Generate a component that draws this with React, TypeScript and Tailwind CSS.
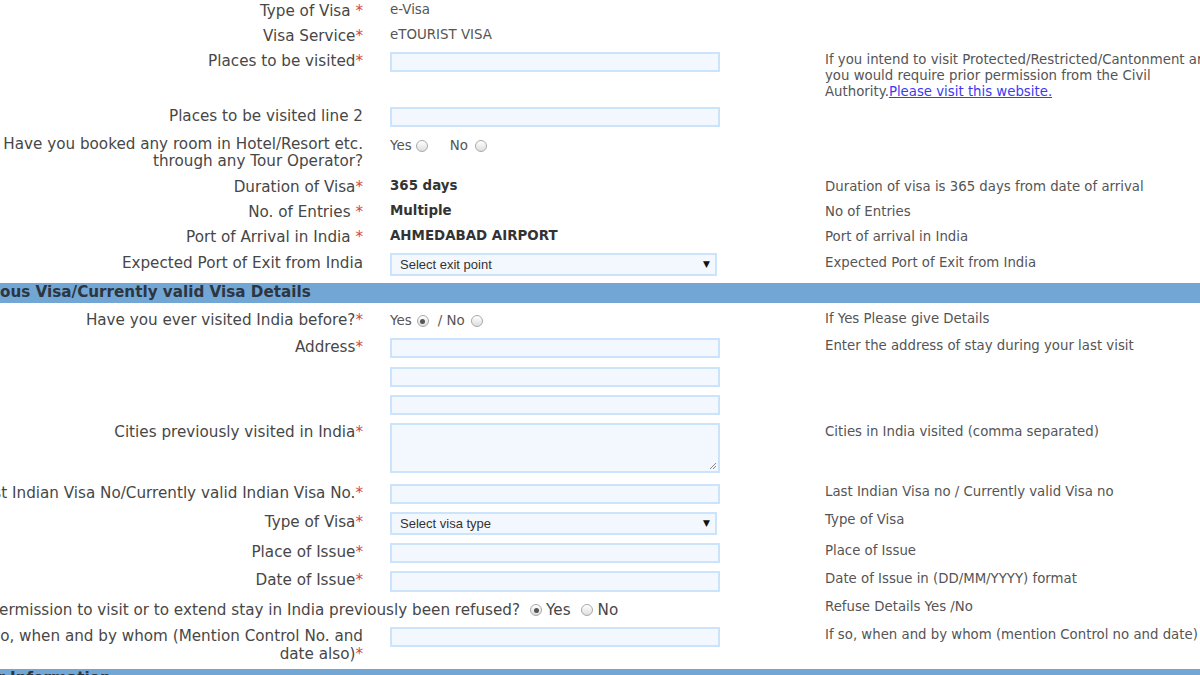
import React from 'react';

const LABEL = "font-['DejaVu_Sans',sans-serif] text-[15.2px] leading-[18px] text-[#474747]";
const VALUE = "font-['DejaVu_Sans',sans-serif] text-[13.4px] leading-[18px] text-[#555]";
const HELP = "font-['DejaVu_Sans',sans-serif] text-[13.3px] leading-[16px] text-[#555]";

function Star({ space }: { space?: boolean }) {
    return <span className="text-[#d0464b]">{space ? ' *' : '*'}</span>;
}

function Radio({ checked }: { checked?: boolean }) {
    return (
        <span className="inline-flex items-center justify-center w-[12px] h-[12px] rounded-full border border-[#a9a9a9] bg-gradient-to-b from-white to-[#dedede]">
            {checked && <span className="w-[5px] h-[5px] rounded-full bg-[#555]" />}
        </span>
    );
}

function TextBox({ h = 'h-[20px]' }: { h?: string }) {
    return <div className={`w-[330px] ${h} border-2 border-[#cbe4fb] bg-[#f3f8fe]`} />;
}

function Select({ text }: { text: string }) {
    return (
        <div className="w-[327px] h-[23px] border-2 border-[#cbe4fb] bg-[#f3f8fe] flex items-center justify-between pl-[8px] pr-[5px]">
            <span className="font-['Liberation_Sans',sans-serif] text-[13px] text-[#333]">{text}</span>
            <span className="text-[9px] text-[#111] leading-none">▼</span>
        </div>
    );
}

type RowProps = {
    h: number;
    label?: React.ReactNode;
    lp?: number;
    control?: React.ReactNode;
    cp?: number;
    help?: React.ReactNode;
    hp?: number;
};

function Row({ h, label, lp = 0, control, cp = 0, help, hp = 0 }: RowProps) {
    return (
        <div className="grid grid-cols-[434px_435px_1fr]" style={{ height: h }}>
            <div className={`${LABEL} text-right pr-[27px]`} style={{ paddingTop: lp }}>{label}</div>
            <div className={VALUE} style={{ paddingTop: cp }}>{control}</div>
            <div className={HELP} style={{ paddingTop: hp }}>{help}</div>
        </div>
    );
}

function SectionBar({ title }: { title: string }) {
    return (
        <div className="h-[20px] bg-[#72a6d4] flex items-center">
            <span className="font-['DejaVu_Sans',sans-serif] font-bold text-[15.2px] text-[#2c3540] leading-none">{title}</span>
        </div>
    );
}

export default function App() {
    return (
        <div className="w-[1200px] h-[675px] overflow-hidden bg-white">
            <div className="ml-[-44px] w-[1320px]">
                <Row h={23} label={<>Type of Visa<Star space /></>} lp={2}
                    control="e-Visa" cp={1} />
                <Row h={26} label={<>Visa Service<Star /></>} lp={4}
                    control="eTOURIST VISA" cp={3} />
                <Row h={55} label={<>Places to be visited<Star /></>} lp={3}
                    control={<TextBox />} cp={3}
                    hp={3}
                    help={
                        <div className="whitespace-nowrap">
                            If you intend to visit Protected/Restricted/Cantonment area<br />
                            you would require prior permission from the Civil<br />
                            Authority.<a className="text-[#3b3bf0] underline">Please visit this website.</a>
                        </div>
                    } />
                <Row h={27} label="Places to be visited line 2" lp={3} control={<TextBox />} cp={3} />
                <Row h={43}
                    label={<div className="leading-[17px]">Have you booked any room in Hotel/Resort etc.<br />through any Tour Operator?</div>} lp={5}
                    control={
                        <div className="flex items-center">
                            <span>Yes</span><span className="ml-[4px] flex"><Radio /></span>
                            <span className="ml-[22px]">No</span><span className="ml-[7px] flex"><Radio /></span>
                        </div>
                    } cp={6} />
                <Row h={26} label={<>Duration of Visa<Star /></>} lp={4}
                    control={<div className="font-bold text-[#333]">365 days</div>} cp={3}
                    help="Duration of visa is 365 days from date of arrival" hp={5} />
                <Row h={25} label={<>No. of Entries<Star space /></>} lp={3}
                    control={<div className="font-bold text-[#333]">Multiple</div>} cp={2}
                    help="No of Entries" hp={4} />
                <Row h={25} label={<>Port of Arrival in India<Star space /></>} lp={3}
                    control={<div className="font-bold text-[#333]">AHMEDABAD AIRPORT</div>} cp={2}
                    help="Port of arrival in India" hp={4} />
                <Row h={33} label="Expected Port of Exit from India" lp={4}
                    control={<Select text="Select exit point" />} cp={3}
                    help="Expected Port of Exit from India" hp={5} />

                <SectionBar title="Previous Visa/Currently valid Visa Details" />

                <Row h={35} label={<>Have you ever visited India before?<Star /></>} lp={8}
                    control={
                        <div className="flex items-center">
                            <span>Yes</span><span className="ml-[5px] flex"><Radio checked /></span>
                            <span className="ml-[9px]">/ No</span><span className="ml-[6px] flex"><Radio /></span>
                        </div>
                    } cp={9}
                    help="If Yes Please give Details" hp={8} />
                <Row h={29} label={<>Address<Star /></>} lp={0} control={<TextBox />}
                    help="Enter the address of stay during your last visit" hp={0} />
                <Row h={28} control={<TextBox />} />
                <Row h={28} control={<TextBox />} />
                <Row h={61} label={<>Cities previously visited in India<Star /></>} lp={0}
                    control={
                        <div className="relative w-[330px] h-[50px] border-2 border-[#cbe4fb] bg-[#f3f8fe]">
                            <svg className="absolute right-[1px] bottom-[1px]" width="9" height="9" viewBox="0 0 9 9">
                                <path d="M8 2 L2 8 M8 5 L5 8" stroke="#888" strokeWidth="1" />
                            </svg>
                        </div>
                    }
                    help="Cities in India visited (comma separated)" hp={1} />
                <Row h={28} label={<>Last Indian Visa No/Currently valid Indian Visa No.<Star /></>} lp={0}
                    control={<TextBox />}
                    help="Last Indian Visa no / Currently valid Visa no" hp={0} />
                <Row h={31} label={<>Type of Visa<Star /></>} lp={1}
                    control={<Select text="Select visa type" />}
                    help="Type of Visa" hp={0} />
                <Row h={28} label={<>Place of Issue<Star /></>} lp={0}
                    control={<TextBox />}
                    help="Place of Issue" hp={0} />
                <Row h={27} label={<>Date of Issue<Star /></>} lp={0}
                    control={<TextBox h="h-[21px]" />}
                    help="Date of Issue in (DD/MM/YYYY) format" hp={0} />
                <div className="grid grid-cols-[869px_1fr] h-[29px]">
                    <div className={`${LABEL} flex items-center h-[18px] mt-[3px] whitespace-nowrap`}>
                        Has permission to visit or to extend stay in India previously been refused?
                        <span className="ml-[10px] flex"><Radio checked /></span>
                        <span className="ml-[4px]">Yes</span>
                        <span className="ml-[10px] flex"><Radio /></span>
                        <span className="ml-[5px]">No</span>
                    </div>
                    <div className={`${HELP} pt-[1px]`}>Refuse Details Yes /No</div>
                </div>
                <Row h={42}
                    label={<>If so, when and by whom (Mention Control No. and<br />date also)<Star /></>} lp={0}
                    control={<TextBox />}
                    help={<span className="whitespace-nowrap">If so, when and by whom (mention Control no and date)</span>} hp={0} />

                <SectionBar title="Other Information" />
            </div>
        </div>
    );
}
